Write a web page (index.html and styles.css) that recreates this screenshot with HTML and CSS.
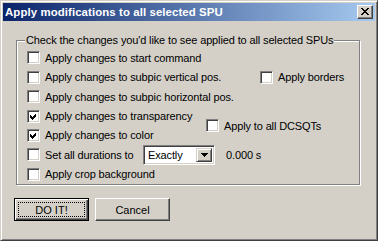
FILE: index.html
```html
<!DOCTYPE html>
<html>
<head>
<meta charset="utf-8">
<link rel="stylesheet" href="styles.css">
</head>
<body>
<div class="window">
  <div class="titlebar">
    <span class="title">Apply modifications to all selected SPU</span>
    <span class="close">
      <svg width="8" height="7" viewBox="0 0 8 7"><path d="M0 0h2l2 2.5L6 0h2L5 3.5 8 7H6L4 4.5 2 7H0l3-3.5z" fill="#000" shape-rendering="crispEdges"/></svg>
    </span>
  </div>
  <div class="content">
    <fieldset class="group">
      <legend>Check the changes you'd like to see applied to all selected SPUs</legend>
      <div class="grid">
        <label class="opt r1"><span class="cb"></span>Apply changes to start command</label>
        <label class="opt r2"><span class="cb"></span>Apply changes to subpic vertical pos.</label>
        <label class="opt r2 c2 borders"><span class="cb"></span>Apply borders</label>
        <label class="opt r3"><span class="cb"></span>Apply changes to subpic horizontal pos.</label>
        <label class="opt r4"><span class="cb checked"><svg width="13" height="13" viewBox="0 0 13 13"><path d="M3 5l2 2 4-4v3l-4 4-2-2z" fill="#000" shape-rendering="crispEdges"/></svg></span>Apply changes to transparency</label>
        <label class="opt r5"><span class="cb checked"><svg width="13" height="13" viewBox="0 0 13 13"><path d="M3 5l2 2 4-4v3l-4 4-2-2z" fill="#000" shape-rendering="crispEdges"/></svg></span>Apply changes to color</label>
        <label class="opt c2 dcsqt"><span class="cb"></span>Apply to all DCSQTs</label>
        <div class="opt r6 durations">
          <label class="opt dur-label"><span class="cb"></span>Set all durations to</label>
          <span class="combo"><span class="combo-text">Exactly</span><span class="combo-btn"><svg width="7" height="4" viewBox="0 0 7 4"><path d="M0 0h7L3.5 4z" fill="#000" shape-rendering="crispEdges"/></svg></span></span>
          <span class="secs">0.000 s</span>
        </div>
        <label class="opt r7"><span class="cb"></span>Apply crop background</label>
      </div>
    </fieldset>
    <div class="buttons">
      <button class="btn default"><span class="focus">DO IT!</span></button>
      <button class="btn">Cancel</button>
    </div>
  </div>
</div>
</body>
</html>
```

FILE: styles.css
```css
html, body {
  margin: 0;
  padding: 0;
  background: #d4d0c8;
}
.window {
  box-sizing: border-box;
  width: 378px;
  height: 241px;
  background: #d4d0c8;
  border: 1px solid;
  border-color: #d4d0c8 #404040 #404040 #d4d0c8;
  box-shadow: inset 1px 1px 0 #fff, inset -1px -1px 0 #808080;
  padding: 2px;
  font-family: "Liberation Sans", Arial, sans-serif;
  font-size: 11px;
  letter-spacing: -0.13px;
  color: #000;
}
.titlebar {
  height: 18px;
  display: flex;
  align-items: center;
  justify-content: space-between;
  padding: 0 2px 0 2px;
  background: linear-gradient(to right, #0a246a, #a6caf0);
  color: #fff;
}
.title {
  font-family: "Liberation Sans", Arial, sans-serif;
  font-weight: bold;
  font-size: 11.4px;
  letter-spacing: 0.1px;
}
.close {
  box-sizing: border-box;
  width: 16px;
  height: 14px;
  background: #d4d0c8;
  border: 1px solid;
  border-color: #fff #404040 #404040 #fff;
  box-shadow: inset -1px -1px 0 #808080;
  display: flex;
  align-items: center;
  justify-content: center;
  padding: 0 1px 1px 0;
}
.close svg { display: block; }
.content {
  padding: 13px 0 0 13px;
}
.group {
  box-sizing: border-box;
  width: 344px;
  height: 151px;
  margin: 0;
  padding: 1px 0 0 10px;
  border: 1px solid #808080;
  box-shadow: inset 1px 1px 0 #fff, 1px 1px 0 #fff;
}
.group legend {
  padding: 0 1px;
  margin-left: -2px;
  background: #d4d0c8;
  line-height: 13px;
}
.grid {
  display: grid;
  grid-template-columns: 179px 1fr;
  grid-template-rows: repeat(7, 19.45px);
}
.opt {
  display: flex;
  align-items: center;
  white-space: nowrap;
}
.r1 { grid-row: 1; grid-column: 1; }
.r2 { grid-row: 2; grid-column: 1; }
.r3 { grid-row: 3; grid-column: 1; }
.r4 { grid-row: 4; grid-column: 1; }
.r5 { grid-row: 5; grid-column: 1; }
.r6 { grid-row: 6; grid-column: 1 / 3; }
.r7 { grid-row: 7; grid-column: 1; }
.borders { grid-row: 2; grid-column: 2; margin-left: 54px; }
.dcsqt { grid-row: 4 / 6; grid-column: 2; align-self: center; }
.cb {
  box-sizing: border-box;
  flex: none;
  width: 13px;
  height: 13px;
  margin-right: 5px;
  background: #fff;
  border: 1px solid;
  border-color: #808080 #fff #fff #808080;
  box-shadow: inset 1px 1px 0 #404040, inset -1px -1px 0 #d4d0c8;
  position: relative;
}
.cb svg {
  position: absolute;
  left: -1px;
  top: -1px;
  display: block;
}
.dur-label { width: 116px; }
.combo {
  box-sizing: border-box;
  display: flex;
  align-items: stretch;
  width: 72px;
  height: 20px;
  background: #fff;
  border: 1px solid;
  border-color: #808080 #fff #fff #808080;
  box-shadow: inset 1px 1px 0 #404040, inset -1px -1px 0 #d4d0c8;
  padding: 2px;
}
.combo-text {
  flex: 1;
  padding-left: 2px;
  display: flex;
  align-items: center;
}
.combo-btn {
  box-sizing: border-box;
  width: 16px;
  background: #d4d0c8;
  border: 1px solid;
  border-color: #d4d0c8 #404040 #404040 #d4d0c8;
  box-shadow: inset 1px 1px 0 #fff, inset -1px -1px 0 #808080;
  display: flex;
  align-items: center;
  justify-content: center;
}
.combo-btn svg { display: block; }
.secs { margin-left: 11px; }
.buttons {
  display: flex;
  gap: 6px;
  margin: 13px 0 0 -2px;
}
.btn {
  box-sizing: border-box;
  width: 75px;
  height: 23px;
  margin: 0;
  padding: 0;
  font-family: "Liberation Sans", Arial, sans-serif;
  font-size: 11px;
  color: #000;
  background: #d4d0c8;
  border: 1px solid;
  border-color: #fff #404040 #404040 #fff;
  box-shadow: inset -1px -1px 0 #808080;
  display: flex;
  align-items: center;
  justify-content: center;
}
.btn.default {
  border: 1px solid #000;
  box-shadow: inset 1px 1px 0 #fff, inset -1px -1px 0 #404040, inset -2px -2px 0 #808080;
  padding: 3px;
}
.focus {
  box-sizing: border-box;
  width: 100%;
  height: 100%;
  border: 1px dotted #000;
  display: flex;
  align-items: center;
  justify-content: center;
}
```
